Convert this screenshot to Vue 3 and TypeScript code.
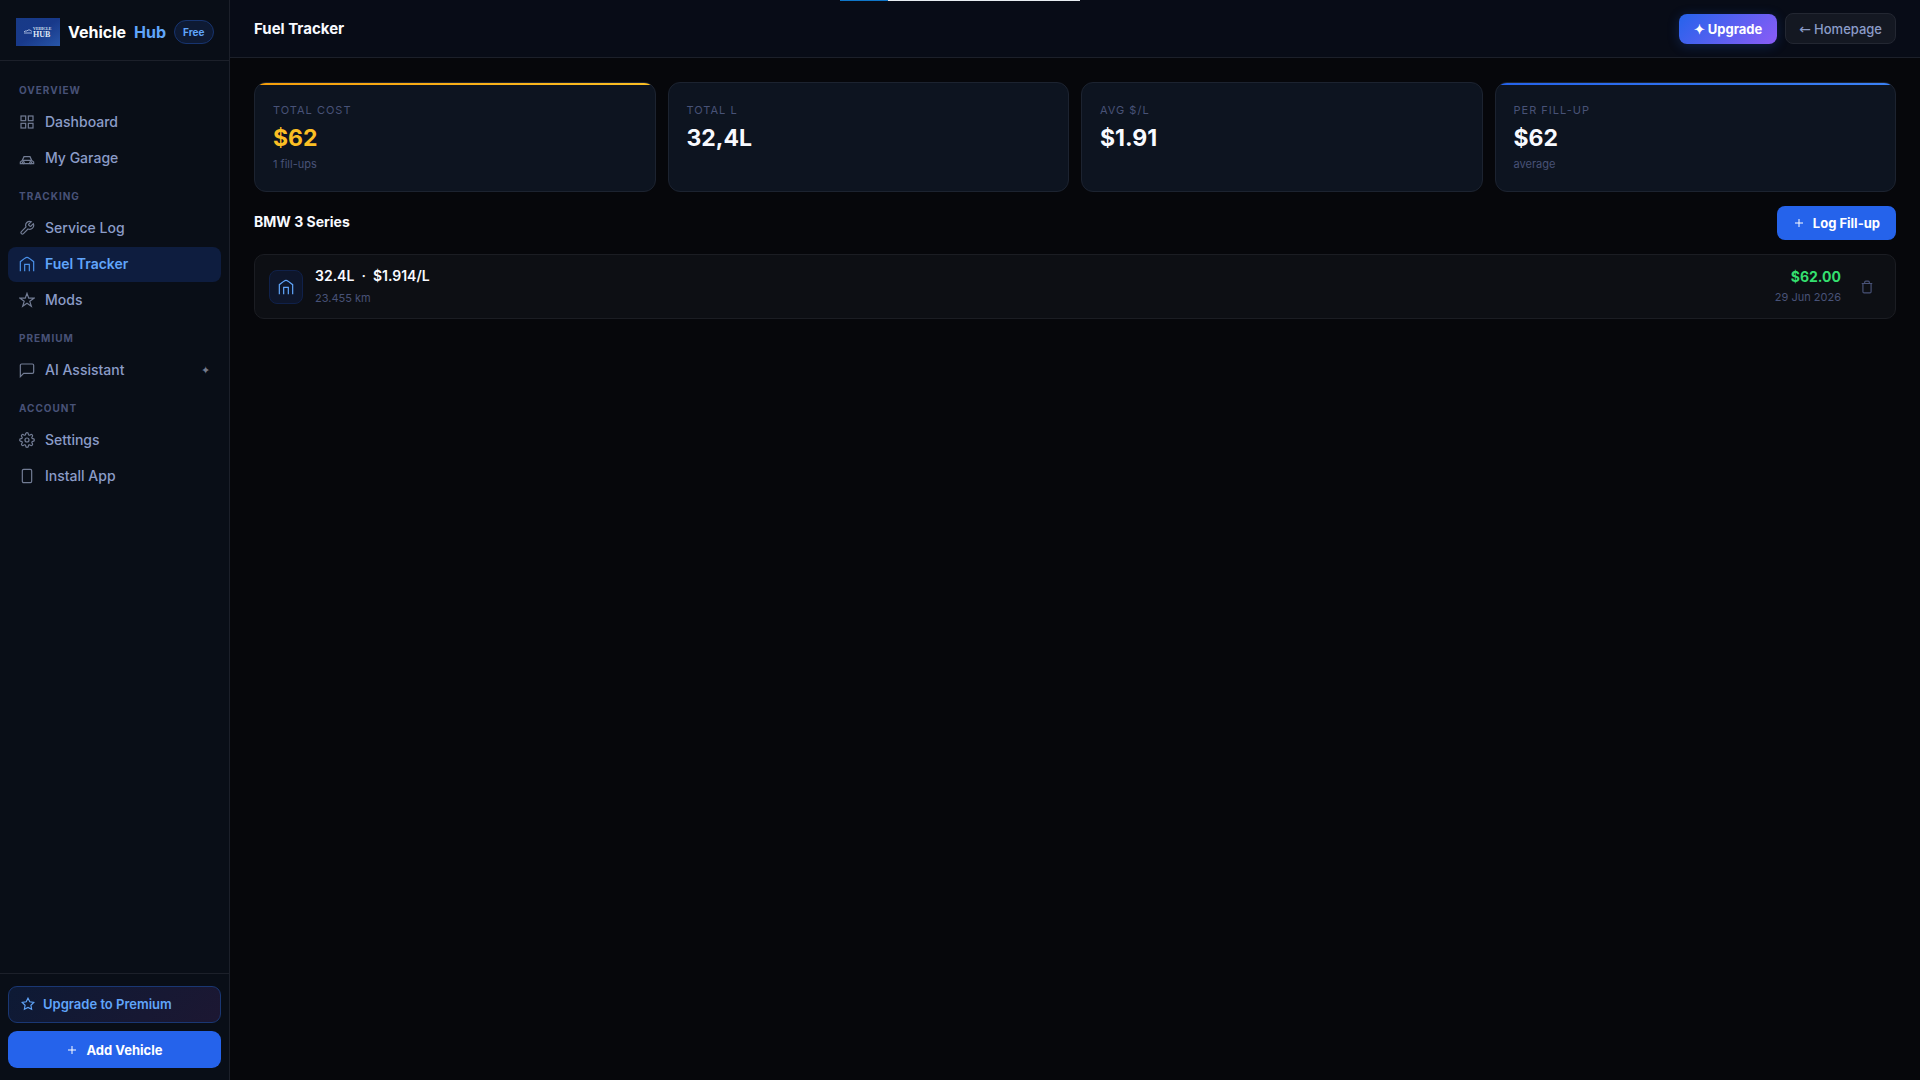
<script setup lang="ts">
interface NavItem {
  label: string
  icon: string
  active?: boolean
  premium?: boolean
}

interface NavGroup {
  title: string
  items: NavItem[]
}

interface Stat {
  label: string
  value: string
  note?: string
  tone?: 'amber' | 'blue'
}

interface FillUp {
  volume: string
  price: string
  odometer: string
  total: string
  date: string
}

const icons: Record<string, string> = {
  grid: '<rect x="3" y="3" width="7" height="7"/><rect x="14" y="3" width="7" height="7"/><rect x="3" y="14" width="7" height="7"/><rect x="14" y="14" width="7" height="7"/>',
  car: '<path d="M5 15.500l2.500-5.500h9l2.500 5.500M2 20.500v-2.500l3-2.500h14l3 2.500v2.500z"/><circle cx="6.500" cy="19" r="1.500"/><circle cx="17.500" cy="19" r="1.500"/>',
  wrench: '<path d="M14.700 6.300a1 1 0 0 0 0 1.400l1.600 1.600a1 1 0 0 0 1.400 0l3.770-3.770a6 6 0 0 1-7.940 7.940l-6.910 6.910a2.120 2.120 0 0 1-3-3l6.910-6.910a6 6 0 0 1 7.940-7.940l-3.760 3.760z"/>',
  fuel: '<path d="M2 23V8.500L9 3.200Q12 1.200 15 3.200L22 8.500V23"/><path d="M8.500 23V12.500h7V23"/>',
  star: '<polygon points="12 2 14.600 9.200 22.500 9.200 16.200 14 18.500 21.500 12 17 5.500 21.500 7.800 14 1.500 9.200 9.400 9.200"/>',
  chat: '<path d="M22 15a2 2 0 0 1-2 2H7l-5 5V5a2 2 0 0 1 2-2h16a2 2 0 0 1 2 2z"/>',
  gear: '<circle cx="12" cy="12" r="3"/><path d="M19.400 15a1.650 1.650 0 0 0 .33 1.820l.06.06a2 2 0 1 1-2.830 2.830l-.06-.06a1.650 1.650 0 0 0-2.800 1.170V21a2 2 0 0 1-4 0v-.09a1.650 1.650 0 0 0-2.900-1.180l-.06.06a2 2 0 1 1-2.830-2.830l.06-.06A1.650 1.650 0 0 0 3.090 14H3a2 2 0 0 1 0-4h.09a1.650 1.650 0 0 0 1.180-2.900l-.06-.06a2 2 0 1 1 2.830-2.830l.06.06A1.650 1.650 0 0 0 10 3.090V3a2 2 0 0 1 4 0v.09a1.650 1.650 0 0 0 2.900 1.180l.06-.06a2 2 0 1 1 2.830 2.830l-.06.06A1.650 1.650 0 0 0 20.910 10H21a2 2 0 0 1 0 4h-.09a1.650 1.650 0 0 0-1.510 1z"/>',
  phone: '<rect x="5" y="2" width="14" height="20" rx="2"/>',
  outlineStar: '<polygon points="12 2 15.090 8.260 22 9.270 17 14.140 18.180 21.020 12 17.770 5.820 21.020 7 14.140 2 9.270 8.910 8.260"/>',
  plus: '<path d="M12 4v16M4 12h16"/>',
  trash: '<path d="M3 6h18M19 6v14a2 2 0 0 1-2 2H7a2 2 0 0 1-2-2V6M8 6V4a2 2 0 0 1 2-2h4a2 2 0 0 1 2 2v2"/>',
}

const groups: NavGroup[] = [
  {
    title: 'Overview',
    items: [
      { label: 'Dashboard', icon: 'grid' },
      { label: 'My Garage', icon: 'car' },
    ],
  },
  {
    title: 'Tracking',
    items: [
      { label: 'Service Log', icon: 'wrench' },
      { label: 'Fuel Tracker', icon: 'fuel', active: true },
      { label: 'Mods', icon: 'star' },
    ],
  },
  { title: 'Premium', items: [{ label: 'AI Assistant', icon: 'chat', premium: true }] },
  {
    title: 'Account',
    items: [
      { label: 'Settings', icon: 'gear' },
      { label: 'Install App', icon: 'phone' },
    ],
  },
]

const stats: Stat[] = [
  { label: 'Total cost', value: '$62', note: '1 fill-ups', tone: 'amber' },
  { label: 'Total L', value: '32,4L' },
  { label: 'Avg $/L', value: '$1.91' },
  { label: 'Per fill-up', value: '$62', note: 'average', tone: 'blue' },
]

const fillUps: FillUp[] = [
  { volume: '32.4L', price: '$1.914/L', odometer: '23.455 km', total: '$62.00', date: '29 Jun 2026' },
]
</script>

<template>
  <div class="app">
    <div class="loading-strip"><span></span></div>

    <aside class="sidebar">
      <div class="brand">
        <svg class="logo" viewBox="0 0 44 28" aria-hidden="true">
          <defs>
            <linearGradient id="logo-fill" x1="0" y1="0" x2="1" y2="1">
              <stop offset="0" stop-color="#183a87" />
              <stop offset="0.5" stop-color="#18398a" />
              <stop offset="1" stop-color="#2856a8" />
            </linearGradient>
          </defs>
          <rect width="44" height="28" fill="url(#logo-fill)" />
          <path d="M8 14l1-1h2l1-1h2l2 1.500M8 15h8" fill="none" stroke="#9fb3da" stroke-width="1" />
          <text x="17" y="12" class="logo-small">VEHICLE</text>
          <text x="17" y="19" class="logo-big">HUB</text>
        </svg>
        <span class="brand-name">Vehicle</span>
        <span class="brand-name accent">Hub</span>
        <span class="plan">Free</span>
      </div>

      <nav class="nav">
        <template v-for="group in groups" :key="group.title">
          <h2 class="nav-title">{{ group.title }}</h2>
          <a
            v-for="item in group.items"
            :key="item.label"
            href="#"
            class="nav-item"
            :class="{ active: item.active }"
          >
            <svg class="icon" viewBox="0 0 24 24" v-html="icons[item.icon]"></svg>
            <span>{{ item.label }}</span>
            <span v-if="item.premium" class="spark">✦</span>
          </a>
        </template>
      </nav>

      <div class="sidebar-foot">
        <button type="button" class="premium">
          <svg class="icon" viewBox="0 0 24 24" v-html="icons.outlineStar"></svg>
          Upgrade to Premium
        </button>
        <button type="button" class="primary">
          <svg class="icon" viewBox="0 0 24 24" v-html="icons.plus"></svg>
          Add Vehicle
        </button>
      </div>
    </aside>

    <div class="page">
      <header class="topbar">
        <h1>Fuel Tracker</h1>
        <div class="actions">
          <button type="button" class="upgrade">✦ Upgrade</button>
          <a href="#" class="home"><span class="arrow">←</span> Homepage</a>
        </div>
      </header>

      <main class="content">
        <section class="stats">
          <article v-for="stat in stats" :key="stat.label" class="stat" :class="stat.tone">
            <p class="stat-label">{{ stat.label }}</p>
            <p class="stat-value">{{ stat.value }}</p>
            <p v-if="stat.note" class="stat-note">{{ stat.note }}</p>
          </article>
        </section>

        <div class="section-head">
          <h2>BMW 3 Series</h2>
          <button type="button" class="primary log">
            <svg class="icon" viewBox="0 0 24 24" v-html="icons.plus"></svg>
            Log Fill-up
          </button>
        </div>

        <article v-for="entry in fillUps" :key="entry.date" class="entry">
          <div class="entry-icon">
            <svg class="icon" viewBox="0 0 24 24" v-html="icons.fuel"></svg>
          </div>
          <div class="entry-main">
            <p class="entry-title">{{ entry.volume }} &nbsp;·&nbsp; {{ entry.price }}</p>
            <p class="entry-sub">{{ entry.odometer }}</p>
          </div>
          <div class="entry-side">
            <p class="entry-total">{{ entry.total }}</p>
            <p class="entry-sub">{{ entry.date }}</p>
          </div>
          <button type="button" class="delete" aria-label="Delete fill-up">
            <svg class="icon" viewBox="0 0 24 24" v-html="icons.trash"></svg>
          </button>
        </article>
      </main>
    </div>
  </div>
</template>

<style>
body {
  margin: 0;
  background: #06070b;
}
</style>

<style scoped>
.app {
  position: relative;
  display: flex;
  min-height: 100vh;
  background: #06070b;
  color: #f8faff;
  font-family: Inter, "Liberation Sans", sans-serif;
  font-size: 14px;
}

.app *,
.app *::before {
  box-sizing: border-box;
}

h1,
h2,
p {
  margin: 0;
}

button {
  border: 0;
  font-family: inherit;
  cursor: pointer;
}

a {
  text-decoration: none;
}

.icon {
  flex: none;
  width: 16px;
  height: 16px;
  fill: none;
  stroke: currentColor;
  stroke-width: 2;
}

.loading-strip {
  position: absolute;
  top: 0;
  left: 50%;
  width: 240px;
  height: 1px;
  transform: translateX(-50%);
  background: #e8edf2;
}

.loading-strip span {
  display: block;
  width: 20%;
  height: 100%;
  background: #0f76c8;
}

.sidebar {
  display: flex;
  flex: none;
  flex-direction: column;
  width: 230px;
  border-right: 1px solid #1c202a;
  background: #090e17;
}

.brand {
  display: flex;
  align-items: center;
  gap: 8px;
  height: 61px;
  padding: 3px 16px 0;
  border-bottom: 1px solid #1c202a;
}

.logo {
  flex: none;
  width: 44px;
  height: 28px;
}

.logo-small,
.logo-big {
  fill: #dfe7f5;
  font-family: "Liberation Serif", serif;
  font-weight: 700;
}

.logo-small {
  font-size: 4px;
}

.logo-big {
  font-size: 8px;
}

.brand-name {
  color: #ffffff;
  font-size: 16px;
  font-weight: 700;
  line-height: 24px;
}

.brand-name.accent {
  color: #60a5fa;
}

.plan {
  padding: 0 8px;
  border: 1px solid #17346f;
  border-radius: 12px;
  background: #0e1a33;
  color: #60a5fa;
  font-size: 10px;
  font-weight: 700;
  line-height: 22px;
}

.nav {
  display: flex;
  flex: 1;
  flex-direction: column;
  gap: 1px;
  padding: 10px 8px;
}

.nav-title {
  padding: 12px 11px 7px;
  color: #485277;
  font-size: 10px;
  font-weight: 700;
  line-height: 14px;
  letter-spacing: 1px;
  text-transform: uppercase;
}

.nav-item {
  display: flex;
  align-items: center;
  gap: 10px;
  height: 35px;
  padding: 0 11px 2px;
  border-radius: 8px;
  color: #8b9cc8;
  font-size: 14px;
  font-weight: 500;
}

.nav-item .icon {
  color: #727c94;
  stroke-width: 1.8;
}

.nav-item.active {
  background: #0e1d3f;
  color: #60a5fa;
  font-weight: 600;
}

.nav-item.active .icon {
  color: #4a90e8;
}

.spark {
  margin-left: auto;
  color: #747a8c;
  font-size: 11px;
}

.sidebar-foot {
  display: flex;
  flex-direction: column;
  gap: 8px;
  padding: 12px 8px;
  border-top: 1px solid #1c202a;
}

.premium {
  display: flex;
  align-items: center;
  gap: 8px;
  height: 37px;
  padding: 0 12px 1px;
  border: 1px solid #1a3773;
  border-radius: 9px;
  background: linear-gradient(135deg, #0d1a35, #1c1732);
  color: #60a5fa;
  font-size: 13px;
  font-weight: 600;
}

.premium .icon {
  width: 14px;
  height: 14px;
}

.primary {
  display: flex;
  align-items: center;
  justify-content: center;
  gap: 8px;
  height: 37px;
  border-radius: 9px;
  background: #2563eb;
  color: #ffffff;
  font-size: 13px;
  font-weight: 700;
}

.primary .icon {
  width: 12px;
  height: 12px;
}

.page {
  flex: 1;
  min-width: 0;
}

.topbar {
  display: flex;
  align-items: center;
  justify-content: space-between;
  height: 58px;
  padding: 0 24px;
  border-bottom: 1px solid #1c202a;
  background: #080c17;
}

.topbar h1 {
  font-size: 15px;
  font-weight: 700;
  line-height: 24px;
}

.actions {
  display: flex;
  align-items: flex-end;
  gap: 8px;
}

.upgrade {
  height: 30px;
  padding: 0 15px;
  border-radius: 8px;
  background: linear-gradient(135deg, #2563eb, #8b5cf6);
  box-shadow: 0 2px 12px rgba(37, 99, 235, 0.25);
  color: #ffffff;
  font-size: 13px;
  font-weight: 700;
}

.home {
  display: flex;
  align-items: center;
  gap: 3px;
  height: 31px;
  padding: 0 13px;
  border: 1px solid #232732;
  border-radius: 8px;
  background: #141822;
  color: #8b9cc8;
  font-size: 13px;
  font-weight: 500;
}

.arrow {
  font-family: "DejaVu Sans", sans-serif;
  font-size: 14px;
  line-height: 16px;
}

.content {
  padding: 24px;
}

.stats {
  display: grid;
  grid-template-columns: repeat(4, 1fr);
  gap: 12px;
}

.stat {
  position: relative;
  min-height: 110px;
  padding: 18px;
  overflow: hidden;
  border: 1px solid #1c2330;
  border-radius: 12px;
  background: #0d1420;
}

.stat.amber::before,
.stat.blue::before {
  position: absolute;
  top: 0;
  right: 0;
  left: 0;
  height: 2px;
  background: linear-gradient(90deg, #f59e0b, #fbbf24);
  content: "";
}

.stat.blue::before {
  background: linear-gradient(90deg, #2563eb, #3b82f6);
}

.stat-label {
  color: #485277;
  font-size: 11px;
  line-height: 18px;
  letter-spacing: 1px;
  text-transform: uppercase;
}

.stat-value {
  font-size: 23px;
  font-weight: 700;
  line-height: 38px;
}

.stat.amber .stat-value {
  color: #fbbf24;
}

.stat-note {
  color: #485277;
  font-size: 11px;
  line-height: 14px;
}

.section-head {
  display: flex;
  align-items: center;
  justify-content: space-between;
  margin: 14px 0;
}

.section-head h2 {
  padding-bottom: 2px;
  font-size: 14px;
  font-weight: 700;
  line-height: 20px;
}

.log {
  height: 34px;
  padding: 0 16px;
  border-radius: 8px;
}

.entry {
  display: flex;
  align-items: center;
  gap: 12px;
  min-height: 65px;
  padding: 0 14px;
  border: 1px solid #1b1d23;
  border-radius: 10px;
  background: #0d0f14;
}

.entry-icon {
  display: grid;
  flex: none;
  place-items: center;
  width: 34px;
  height: 34px;
  border: 1px solid #10214a;
  border-radius: 8px;
  background: #0e162b;
  color: #60a5fa;
}

.entry-icon .icon {
  stroke-width: 1.8;
}

.entry-main {
  flex: 1;
}

.entry-title {
  font-size: 14px;
  font-weight: 600;
  line-height: 22px;
}

.entry-sub {
  color: #485277;
  font-size: 11px;
  line-height: 20px;
}

.entry-main .entry-sub {
  line-height: 22px;
}

.entry-side {
  text-align: right;
}

.entry-total {
  color: #34df6f;
  font-size: 14px;
  font-weight: 700;
  line-height: 20px;
}

.delete {
  display: grid;
  place-items: center;
  width: 28px;
  height: 28px;
  padding: 0;
  background: transparent;
  color: #485277;
}

.delete .icon {
  width: 14px;
  height: 14px;
}
</style>
